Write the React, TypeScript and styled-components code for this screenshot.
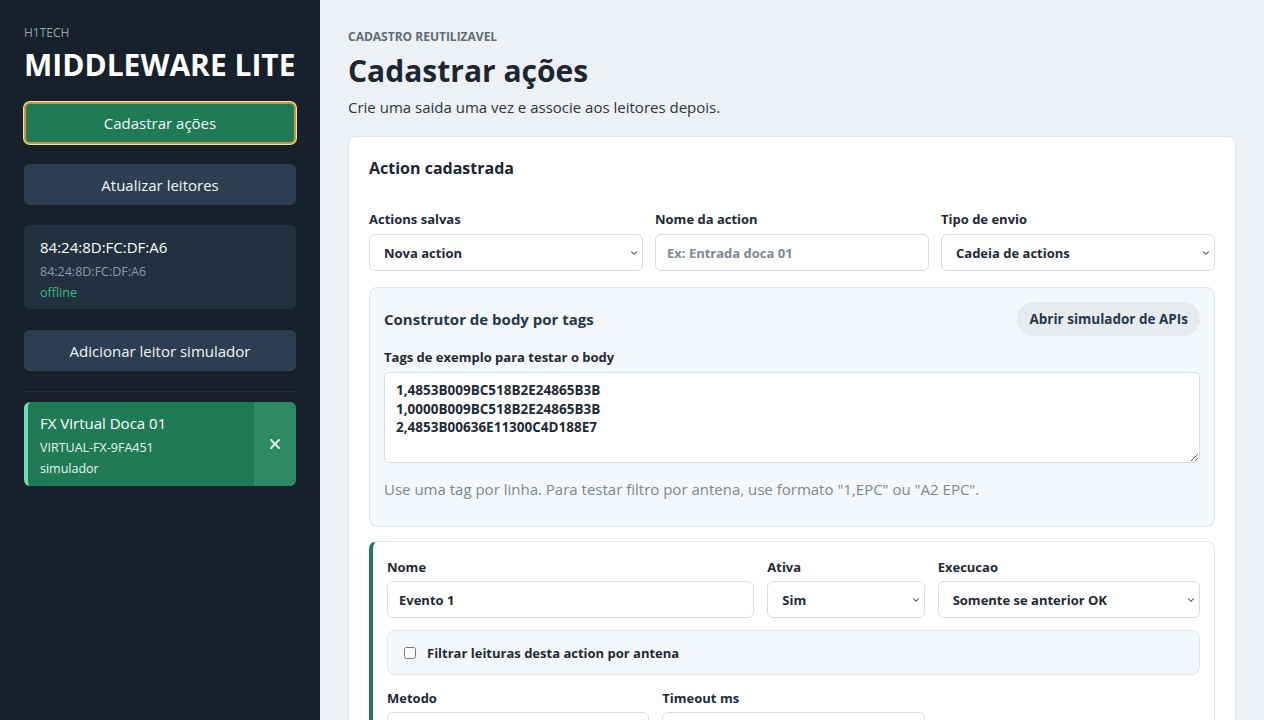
import { FC, ReactNode } from 'react'
import styled, { createGlobalStyle } from 'styled-components'
import { ChevronDown } from 'lucide-react'

const GlobalStyle = createGlobalStyle`
  html, body {
    margin: 0;
    padding: 0;
    height: 100%;
    overflow: hidden;
  }
  body {
    font-family: "Open Sans", "Noto Sans", sans-serif;
    background: #edf1f4;
    color: #1e2a35;
  }
  * {
    box-sizing: border-box;
  }
`

const Layout = styled.div`
  display: grid;
  grid-template-columns: 320px 1fr;
  height: 720px;
`

const Sidebar = styled.aside`
  background: #17212b;
  padding: 24px;
  display: flex;
  flex-direction: column;
`

const Brand = styled.div`
  font-size: 12px;
  line-height: 16px;
  color: #95a3b0;
  margin-top: 1px;
`

const AppTitle = styled.h1`
  margin: 4px 0 17px;
  font-size: 30px;
  line-height: 40px;
  font-weight: 700;
  color: #ffffff;
  white-space: nowrap;
`

const SideButton = styled.button<{ $active?: boolean }>`
  width: 100%;
  height: ${(p) => (p.$active ? '42px' : '41px')};
  border-radius: 6px;
  border: ${(p) => (p.$active ? '2px solid #c99a35' : 'none')};
  box-shadow: ${(p) => (p.$active ? '0 0 0 1px #f1e1b6' : 'none')};
  background: ${(p) => (p.$active ? '#1f7a57' : '#2c3e4f')};
  color: #f3f6f8;
  font-family: inherit;
  font-size: 15px;
  margin-bottom: 20px;
  flex-shrink: 0;
`

const ReaderCard = styled.div`
  background: #223140;
  border-radius: 6px;
  padding: 12px 16px 0;
  height: 84px;
  margin-bottom: 21px;
  flex-shrink: 0;
`

const ReaderName = styled.div`
  font-size: 15px;
  line-height: 20px;
  color: #ffffff;
  margin-bottom: 4px;
`

const ReaderMeta = styled.div<{ $tone?: 'muted' | 'ok' | 'light' }>`
  font-size: 12.5px;
  line-height: 21px;
  color: ${(p) => (p.$tone === 'ok' ? '#3bbf7c' : p.$tone === 'light' ? '#e8f5ee' : '#8e9ba7')};
`

const Divider = styled.hr`
  border: none;
  border-top: 1px solid #24323f;
  margin: 0 0 10px;
  width: 100%;
`

const SimCard = styled.div`
  display: flex;
  background: #207a57;
  border-left: 4px solid #6fdfae;
  border-radius: 6px;
  overflow: hidden;
  height: 84px;
  flex-shrink: 0;
`

const SimInfo = styled.div`
  flex: 1;
  padding: 11px 12px 0;
`

const SimRemove = styled.button`
  width: 42px;
  border: none;
  background: #2e8965;
  color: #e9f6ef;
  display: flex;
  align-items: center;
  justify-content: center;
  padding: 0;
`

const Main = styled.main`
  padding: 28px 28px 0;
  overflow: hidden;
`

const Eyebrow = styled.div`
  font-size: 12px;
  font-weight: 700;
  color: #5d6c79;
`

const PageTitle = styled.h2`
  margin: 5px 0 6px;
  font-size: 30px;
  font-weight: 700;
  color: #1b2631;
`

const Subtitle = styled.p`
  margin: 0 0 19px;
  font-size: 15px;
  color: #2a3540;
`

const Card = styled.section`
  background: #ffffff;
  border: 1px solid #e0e6eb;
  border-radius: 8px;
  padding: 20px 20px 0;
`

const CardTitle = styled.h3`
  margin: 0 0 31px;
  font-size: 16px;
  font-weight: 700;
  color: #1b2631;
`

const FieldGrid = styled.div<{ $cols: string; $gap?: number }>`
  display: grid;
  grid-template-columns: ${(p) => p.$cols};
  gap: ${(p) => p.$gap ?? 12}px;
`

const Field = styled.label<{ $gap?: number }>`
  display: flex;
  flex-direction: column;
  gap: ${(p) => p.$gap ?? 6}px;
  min-width: 0;
`

const Label = styled.span`
  font-size: 13px;
  font-weight: 700;
  color: #1e2a35;
`

const TextInput = styled.input`
  height: 37px;
  width: 100%;
  border: 1px solid #d6dde3;
  border-radius: 6px;
  padding: 0 11px;
  font-family: inherit;
  font-size: 13px;
  font-weight: 700;
  color: #1e2a35;
  background: #fff;
  &::placeholder {
    color: #7e8994;
  }
`

const SelectWrap = styled.div`
  position: relative;
  color: #3a434b;
  & > svg {
    position: absolute;
    right: 4px;
    top: 14px;
    pointer-events: none;
  }
`

const NativeSelect = styled.select`
  appearance: none;
  width: 100%;
  height: 37px;
  border: 1px solid #d6dde3;
  border-radius: 6px;
  padding: 0 24px 0 14px;
  font-family: inherit;
  font-size: 13px;
  font-weight: 700;
  color: #1e2a35;
  background: #fff;
`

const BuilderPanel = styled.div`
  margin-top: 16px;
  background: #f5f8fa;
  border: 1px solid #e0e6eb;
  border-radius: 8px;
  padding: 14px 14px 27px;
`

const BuilderHead = styled.div`
  display: flex;
  justify-content: space-between;
  align-items: center;
  margin-bottom: 12px;
`

const BuilderTitle = styled.h4`
  margin: 0;
  font-size: 15px;
  font-weight: 700;
  color: #25384a;
`

const PillButton = styled.button`
  height: 34px;
  padding: 0 12px;
  border: none;
  border-radius: 17px;
  background: #e6ebef;
  color: #25384a;
  font-family: inherit;
  font-size: 13.5px;
  font-weight: 700;
`

const TagArea = styled.textarea`
  height: 91px;
  width: 100%;
  resize: vertical;
  border: 1px solid #d6dde3;
  border-radius: 6px;
  padding: 8px 11px;
  font-family: inherit;
  font-size: 13.5px;
  font-weight: 700;
  line-height: 18.5px;
  color: #1e2a35;
  background: #fff;
  display: block;
`

const Hint = styled.p`
  margin: 16px 0 0;
  font-size: 15px;
  color: #7b8794;
`

const EventCard = styled.div`
  margin-top: 14px;
  background: #fff;
  border: 1px solid #e0e6eb;
  border-left: 4px solid #1f7a57;
  border-radius: 8px;
  padding: 16px 14px 20px 14px;
`

const CheckRow = styled.label`
  display: flex;
  align-items: center;
  gap: 11px;
  margin: 12px 0 14px;
  height: 45px;
  padding: 0 16px;
  background: #f5f8fa;
  border: 1px solid #e0e6eb;
  border-radius: 8px;
  font-size: 13px;
  font-weight: 700;
  color: #1e2a35;
`

const Check = styled.input`
  margin: 0;
  width: 12px;
  height: 12px;
`

const CloseIcon: FC = () => (
  <svg width="12" height="12" viewBox="0 0 12 12" fill="none">
    <path d="M2 2l8 8M10 2l-8 8" stroke="currentColor" strokeWidth="1.8" strokeLinecap="round" />
  </svg>
)

const Select: FC<{ value: string; children: ReactNode }> = ({ value, children }) => (
  <SelectWrap>
    <NativeSelect defaultValue={value}>{children}</NativeSelect>
    <ChevronDown size={10} strokeWidth={2.5} />
  </SelectWrap>
)

const tags = ['1,4853B009BC518B2E24865B3B', '1,0000B009BC518B2E24865B3B', '2,4853B00636E11300C4D188E7']

export default function App() {
  return (
    <Layout>
      <GlobalStyle />
      <Sidebar>
        <Brand>H1TECH</Brand>
        <AppTitle>MIDDLEWARE LITE</AppTitle>
        <SideButton $active>Cadastrar ações</SideButton>
        <SideButton>Atualizar leitores</SideButton>
        <ReaderCard>
          <ReaderName>84:24:8D:FC:DF:A6</ReaderName>
          <ReaderMeta>84:24:8D:FC:DF:A6</ReaderMeta>
          <ReaderMeta $tone="ok">offline</ReaderMeta>
        </ReaderCard>
        <SideButton>Adicionar leitor simulador</SideButton>
        <Divider />
        <SimCard>
          <SimInfo>
            <ReaderName>FX Virtual Doca 01</ReaderName>
            <ReaderMeta $tone="light">VIRTUAL-FX-9FA451</ReaderMeta>
            <ReaderMeta $tone="light">simulador</ReaderMeta>
          </SimInfo>
          <SimRemove aria-label="Remover">
            <CloseIcon />
          </SimRemove>
        </SimCard>
      </Sidebar>

      <Main>
        <Eyebrow>CADASTRO REUTILIZAVEL</Eyebrow>
        <PageTitle>Cadastrar ações</PageTitle>
        <Subtitle>Crie uma saida uma vez e associe aos leitores depois.</Subtitle>

        <Card>
          <CardTitle>Action cadastrada</CardTitle>
          <FieldGrid $cols="repeat(3, minmax(0, 1fr))">
            <Field>
              <Label>Actions salvas</Label>
              <Select value="nova">
                <option value="nova">Nova action</option>
              </Select>
            </Field>
            <Field>
              <Label>Nome da action</Label>
              <TextInput placeholder="Ex: Entrada doca 01" />
            </Field>
            <Field>
              <Label>Tipo de envio</Label>
              <Select value="cadeia">
                <option value="cadeia">Cadeia de actions</option>
              </Select>
            </Field>
          </FieldGrid>

          <BuilderPanel>
            <BuilderHead>
              <BuilderTitle>Construtor de body por tags</BuilderTitle>
              <PillButton>Abrir simulador de APIs</PillButton>
            </BuilderHead>
            <Field>
              <Label>Tags de exemplo para testar o body</Label>
              <TagArea defaultValue={tags.join('\n')} />
            </Field>
            <Hint>Use uma tag por linha. Para testar filtro por antena, use formato "1,EPC" ou "A2 EPC".</Hint>
          </BuilderPanel>

          <EventCard>
            <FieldGrid $cols="minmax(0, 1.4fr) minmax(0, 0.6fr) minmax(0, 1fr)" $gap={13}>
              <Field $gap={5}>
                <Label>Nome</Label>
                <TextInput defaultValue="Evento 1" />
              </Field>
              <Field $gap={5}>
                <Label>Ativa</Label>
                <Select value="sim">
                  <option value="sim">Sim</option>
                </Select>
              </Field>
              <Field $gap={5}>
                <Label>Execucao</Label>
                <Select value="ok">
                  <option value="ok">Somente se anterior OK</option>
                </Select>
              </Field>
            </FieldGrid>
            <CheckRow>
              <Check type="checkbox" />
              Filtrar leituras desta action por antena
            </CheckRow>
            <FieldGrid $cols="repeat(3, minmax(0, 1fr))" $gap={13}>
              <Field $gap={5}>
                <Label>Metodo</Label>
                <Select value="post">
                  <option value="post">POST</option>
                </Select>
              </Field>
              <Field $gap={5}>
                <Label>Timeout ms</Label>
                <TextInput defaultValue="5000" />
              </Field>
            </FieldGrid>
          </EventCard>
        </Card>
      </Main>
    </Layout>
  )
}
